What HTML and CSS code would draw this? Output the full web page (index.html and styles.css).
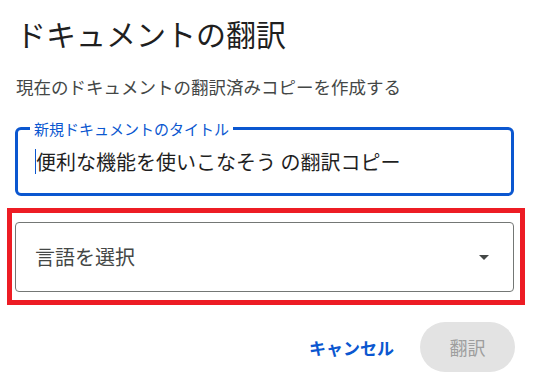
FILE: index.html
```html
<!DOCTYPE html>
<html lang="ja">
<head>
  <meta charset="UTF-8">
  <title>ドキュメントの翻訳</title>
  <link rel="stylesheet" href="styles.css">
</head>
<body>

<div class="dialog">
  <h1>ドキュメントの翻訳</h1>
  <p class="desc">現在のドキュメントの翻訳済みコピーを作成する</p>

  <div class="field">
    <span class="field-label">新規ドキュメントのタイトル</span>
    <span class="caret"></span>
    <span class="field-value">便利な機能を使いこなそう の翻訳コピー</span>
  </div>

  <div class="highlight">
    <div class="select">
      <span class="select-text">言語を選択</span>
      <span class="arrow"></span>
    </div>
  </div>

  <div class="actions">
    <button class="btn-text">キャンセル</button>
    <button class="btn-filled" disabled>翻訳</button>
  </div>
</div>

</body>
</html>
```

FILE: styles.css
```css
* {
  box-sizing: border-box;
}

html, body {
  margin: 0;
  padding: 0;
  background: #ffffff;
  font-family: "Noto Sans CJK JP", "Noto Sans", sans-serif;
  color: #1f1f1f;
  overflow: hidden;
}

.dialog {
  width: 534px;
  padding: 18px 20px 0 15px;
  display: flex;
  flex-direction: column;
}

h1 {
  margin: 0 0 0 1px;
  font-size: 30px;
  line-height: 30px;
  font-weight: 400;
  color: #1f1f1f;
}

.desc {
  margin: 30px 0 0 1px;
  font-size: 17.5px;
  line-height: 18px;
  color: #444746;
}

.field {
  position: relative;
  margin-top: 31px;
  height: 69px;
  border: 3px solid #0b57d0;
  border-radius: 6px;
  padding-left: 17px;
  display: flex;
  align-items: center;
}

.field-label {
  position: absolute;
  top: -9px;
  left: 12px;
  padding: 0 4px;
  background: #ffffff;
  font-size: 15px;
  line-height: 15px;
  color: #0b57d0;
}

.caret {
  width: 1px;
  height: 25px;
  background: #0b57d0;
}

.field-value {
  font-size: 20px;
  line-height: 20px;
  color: #1f1f1f;
}

.highlight {
  margin: 12px -11px 0 -8px;
  border: 5px solid #ed1c24;
  padding: 9px 6px 8px 3px;
}

.select {
  height: 70px;
  border: 1px solid #747775;
  border-radius: 4px;
  padding: 0 24px 0 19px;
  display: flex;
  align-items: center;
  justify-content: space-between;
}

.select-text {
  font-size: 20px;
  line-height: 20px;
  color: #444746;
}

.arrow {
  width: 0;
  height: 0;
  border-left: 5px solid transparent;
  border-right: 5px solid transparent;
  border-top: 5px solid #444746;
}

.actions {
  margin-top: 17px;
  display: flex;
  justify-content: flex-end;
  align-items: center;
  gap: 26px;
}

.btn-text {
  border: none;
  background: none;
  padding: 0;
  font-family: inherit;
  font-size: 17px;
  font-weight: 700;
  color: #0b57d0;
}

.btn-filled {
  width: 95px;
  height: 50px;
  border: none;
  border-radius: 25px;
  background: #e3e3e3;
  font-family: inherit;
  font-size: 18px;
  color: #9e9e9e;
  margin-right: -1px;
}
```
